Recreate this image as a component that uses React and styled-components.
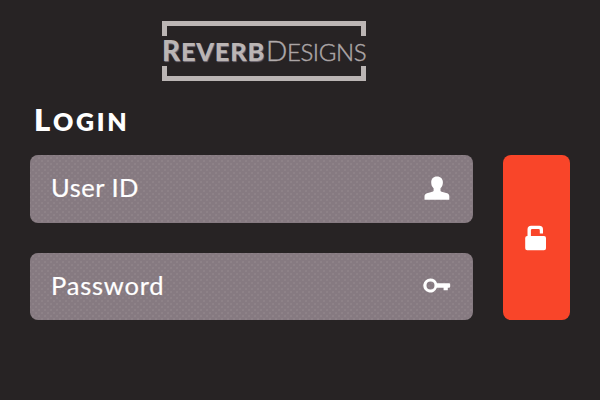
import React from "react";
import styled, { createGlobalStyle } from "styled-components";

const GlobalStyle = createGlobalStyle`
  html, body { margin: 0; background: #272324; }
  * { box-sizing: border-box; }
`;

const Page = styled.main`
  width: 600px;
  height: 400px;
  overflow: hidden;
  background: #272324;
  color: #fff;
  font-family: Lato, "Liberation Sans", sans-serif;
  display: flex;
  flex-direction: column;
  padding: 21px 30px 0;
`;

const Logo = styled.div`
  width: 204px;
  height: 60px;
  margin-left: 132px;
  display: flex;
  flex-direction: column;
  justify-content: space-between;
  color: #bbb5b4;
`;

const Bracket = styled.div`
  height: 15px;
  border: solid #bbb5b4;
  border-width: ${(p) => (p.$bottom ? "0 5px 5px" : "5px 5px 0")};
`;

const Wordmark = styled.div`
  height: 30px;
  display: flex;
  align-items: baseline;
  white-space: nowrap;
  line-height: 28px;
`;

const Word = styled.span`
  width: ${(p) => p.$width}px;
  font-size: 28px;
  font-weight: ${(p) => p.$weight};
  letter-spacing: ${(p) => p.$spacing}px;
  -webkit-text-stroke: ${(p) => (p.$shadow ? "0" : "0.5px #9d9799")};
  text-shadow: ${(p) => (p.$shadow ? "0.5px 1px 1px #77717b" : "none")};
`;

const SmallCap = styled.span`
  font-size: ${(p) => p.$size}px;
`;

const Title = styled.h1`
  margin: 19px 0 0 4px;
  height: 38px;
  line-height: 38px;
  font-size: 31px;
  font-weight: 800;
  letter-spacing: 2.7px;
`;

const Form = styled.form`
  margin-top: 17px;
  display: grid;
  grid-template-columns: 442.5px 67.5px;
  column-gap: 30px;
  height: 165px;
`;

const Fields = styled.div`
  display: grid;
  grid-template-rows: 67.5px 67.5px;
  row-gap: 30px;
`;

const Field = styled.label`
  display: flex;
  align-items: center;
  justify-content: space-between;
  padding: 0 22px 1px 21px;
  border-radius: 8px;
  background-color: #867a81;
  background-image: radial-gradient(circle, #8e8288 0.7px, transparent 1px),
    radial-gradient(circle, #8e8288 0.7px, transparent 1px);
  background-size: 6px 6px;
  background-position: 0 0, 3px 3px;
`;

const FieldText = styled.span`
  font-size: 25.5px;
  font-weight: 400;
  -webkit-text-stroke: 0.2px #fff;
  line-height: 30px;
  padding-bottom: 2px;
  letter-spacing: ${(p) => p.$spacing}px;
`;

const Submit = styled.button`
  display: flex;
  align-items: center;
  justify-content: center;
  padding: 0;
  border: 0;
  border-radius: 8px;
  background: #f94529;
`;

const Icon = styled.svg`
  display: block;
  flex: none;
  fill: #fff;
`;

export default function App() {
  return (
    <Page>
      <GlobalStyle />
      <Logo>
        <Bracket />
        <Wordmark>
          <Word $width={104} $weight={900} $spacing={0.7} $shadow>
            R<SmallCap $size={25.5}>EVERB</SmallCap>
          </Word>
          <Word $width={100} $weight={300} $spacing={-0.4}>
            D<SmallCap $size={24}>ESIGNS</SmallCap>
          </Word>
        </Wordmark>
        <Bracket $bottom />
      </Logo>
      <Title>
        L<SmallCap $size={25}>OGIN</SmallCap>
      </Title>
      <Form>
        <Fields>
          <Field>
            <FieldText $spacing={0.5}>User ID</FieldText>
            <Icon width="28" height="28" viewBox="0 0 28 28">
              <path d="M14 2.500c-3.700 0-5.800 2.400-5.800 5.700 0 2.500.8 4.600 2.400 6v2.300c0 .7-.4 1-1.200 1.200l-5.400 1.500C2.400 19.700 1.500 20.700 1.500 22.500v3.200h24.800v-3.200c0-1.800-.6-2.800-2.200-3.300l-5.400-1.500c-.8-.2-1.200-.5-1.200-1.200v-2.300c1.600-1.400 2.400-3.500 2.400-6 0-3.300-2.200-5.700-5.900-5.700z" />
            </Icon>
          </Field>
          <Field>
            <FieldText $spacing={0.8}>Password</FieldText>
            <Icon width="28" height="16" viewBox="0 0 28 16">
              <path
                fillRule="evenodd"
                d="M7.500 0.500a7 7 0 0 1 6.600 4.700H26q1.200 0 1.200 1.200v2.200q0 1.200-1.200 1.200h-1.200v2.500h-4.200V9.800h-6.700A7 7 0 1 1 7.500.500zM7.500 3.500a4 4 0 1 0 0 8 4 4 0 0 0 0-8z"
              />
            </Icon>
          </Field>
        </Fields>
        <Submit type="button" aria-label="Log in">
          <Icon width="24" height="26" viewBox="0 0 24 26">
            <path d="M3.500 11V4.500Q3.500.8 7.200.8h8.100Q19 .800 19 4.500V8.500h-3.200V5.300q0-1.200-1.200-1.200H8.100q-1.200 0-1.200 1.200V11H20q2 0 2 2v10.200q0 2-2 2H3.200q-2 0-2-2V13q0-2 2-2z" />
          </Icon>
        </Submit>
      </Form>
    </Page>
  );
}
